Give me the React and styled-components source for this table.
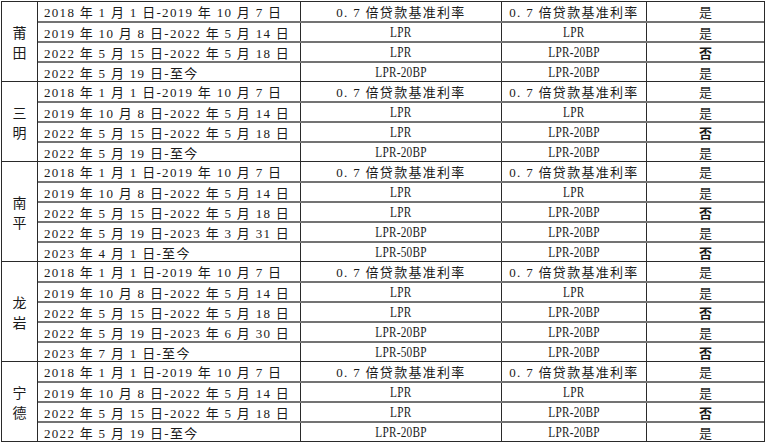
import React from "react";
import styled, { createGlobalStyle } from "styled-components";

const Global = createGlobalStyle`
  html, body { margin: 0; padding: 0; background: #fff; }
  body { font-family: "Liberation Serif", "Noto Sans CJK SC", serif; color: #1a1a1a; }
`;

const Page = styled.div`
  padding: 1px 0 0 1px;
  width: 767px;
  height: 447px;
  box-sizing: border-box;
`;

const Sheet = styled.div`
  width: 764px;
  border: 1px solid #2a2a2a;
  box-sizing: border-box;
  display: flex;
  flex-direction: column;
`;

const Group = styled.div`
  display: flex;
  border-top: ${(p) => (p.$first ? "none" : "1px solid #2a2a2a")};
`;

const Label = styled.div`
  width: 35px;
  flex: none;
  border-right: 1px solid #2a2a2a;
  display: flex;
  flex-direction: column;
  align-items: center;
  justify-content: center;
  font-family: "Noto Sans CJK SC", sans-serif;
  font-size: 14px;
  line-height: 20px;
`;

const Rows = styled.div`
  flex: 1;
  display: flex;
  flex-direction: column;
`;

const Row = styled.div`
  display: grid;
  grid-template-columns: 262px 201px 145px 1fr;
  height: ${(p) => (p.$first ? "19px" : "20px")};
  box-sizing: border-box;
  border-top: ${(p) => (p.$first ? "none" : "2px solid #737373")};
`;

const Cell = styled.div`
  display: flex;
  align-items: center;
  justify-content: ${(p) => (p.$left ? "flex-start" : "center")};
  padding-left: ${(p) => (p.$left ? "6px" : "0")};
  border-left: ${(p) => (p.$noLine ? "none" : "1px solid #2a2a2a")};
  font-size: 13px;
  white-space: nowrap;
  overflow: hidden;
  letter-spacing: 1.3px;
`;

const Latin = styled.span`
  display: inline-block;
  font-family: "Liberation Serif", serif;
  font-size: 14.5px;
  line-height: 18px;
  letter-spacing: 0.3px;
  transform: scaleX(0.78);
`;

const Verdict = styled.span`
  font-family: "Noto Sans CJK SC", sans-serif;
  font-size: 13px;
  font-weight: ${(p) => (p.$bold ? 700 : 400)};
  letter-spacing: 0;
`;

const rateStd = "0. 7 倍贷款基准利率";
const isLatin = (s) => s.startsWith("LPR");

const base = [
  ["2018 年 1 月 1 日-2019 年 10 月 7 日", rateStd, rateStd, "是"],
  ["2019 年 10 月 8 日-2022 年 5 月 14 日", "LPR", "LPR", "是"],
  ["2022 年 5 月 15 日-2022 年 5 月 18 日", "LPR", "LPR-20BP", "否"],
];

const groups = [
  { name: "莆田", rows: [...base, ["2022 年 5 月 19 日-至今", "LPR-20BP", "LPR-20BP", "是"]] },
  { name: "三明", rows: [...base, ["2022 年 5 月 19 日-至今", "LPR-20BP", "LPR-20BP", "是"]] },
  {
    name: "南平",
    rows: [
      ...base,
      ["2022 年 5 月 19 日-2023 年 3 月 31 日", "LPR-20BP", "LPR-20BP", "是"],
      ["2023 年 4 月 1 日-至今", "LPR-50BP", "LPR-20BP", "否"],
    ],
  },
  {
    name: "龙岩",
    rows: [
      ...base,
      ["2022 年 5 月 19 日-2023 年 6 月 30 日", "LPR-20BP", "LPR-20BP", "是"],
      ["2023 年 7 月 1 日-至今", "LPR-50BP", "LPR-20BP", "否"],
    ],
  },
  { name: "宁德", rows: [...base, ["2022 年 5 月 19 日-至今", "LPR-20BP", "LPR-20BP", "是"]] },
];

const Rate = ({ text }) => (isLatin(text) ? <Latin>{text}</Latin> : text);

export default function App() {
  return (
    <Page>
      <Global />
      <Sheet>
        {groups.map((g, gi) => (
          <Group key={g.name} $first={gi === 0}>
            <Label>
              {g.name.split("").map((c) => (
                <span key={c}>{c}</span>
              ))}
            </Label>
            <Rows>
              {g.rows.map((r, i) => (
                <Row key={i} $first={i === 0}>
                  <Cell $left $noLine>{r[0]}</Cell>
                  <Cell><Rate text={r[1]} /></Cell>
                  <Cell><Rate text={r[2]} /></Cell>
                  <Cell>
                    <Verdict $bold={r[3] === "否"}>{r[3]}</Verdict>
                  </Cell>
                </Row>
              ))}
            </Rows>
          </Group>
        ))}
      </Sheet>
    </Page>
  );
}
